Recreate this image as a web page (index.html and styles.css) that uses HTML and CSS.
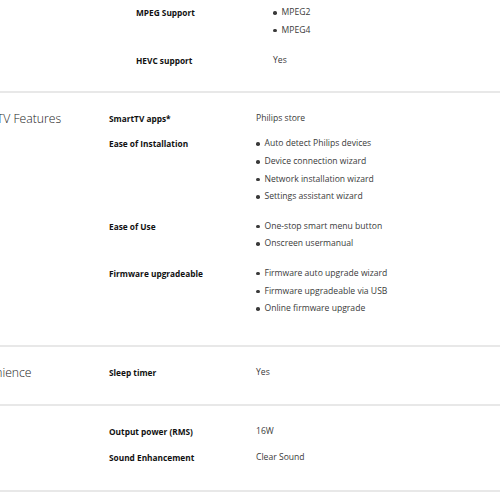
FILE: index.html
```html
<!DOCTYPE html>
<html lang="en">
<head>
  <meta charset="UTF-8" />
  <meta name="viewport" content="width=device-width, initial-scale=1.0" />
  <title>Specifications</title>
  <link rel="stylesheet" href="styles.css">
</head>
<body>

  <div class="specs">

    <!-- Video (tail end) -->
    <section class="spec-group spec-group--first">
      <h3 class="group-title"></h3>
      <dl class="rows rows--inset">
        <div class="row">
          <dt>MPEG Support</dt>
          <dd>
            <ul class="bullets">
              <li>MPEG2</li>
              <li>MPEG4</li>
            </ul>
          </dd>
        </div>
        <div class="row">
          <dt>HEVC support</dt>
          <dd>Yes</dd>
        </div>
      </dl>
    </section>

    <!-- Smart TV -->
    <section class="spec-group">
      <h3 class="group-title">Smart TV Features</h3>
      <dl class="rows">
        <div class="row">
          <dt>SmartTV apps*</dt>
          <dd>Philips store</dd>
        </div>
        <div class="row">
          <dt>Ease of Installation</dt>
          <dd>
            <ul class="bullets">
              <li>Auto detect Philips devices</li>
              <li>Device connection wizard</li>
              <li>Network installation wizard</li>
              <li>Settings assistant wizard</li>
            </ul>
          </dd>
        </div>
        <div class="row">
          <dt>Ease of Use</dt>
          <dd>
            <ul class="bullets">
              <li>One-stop smart menu button</li>
              <li>Onscreen usermanual</li>
            </ul>
          </dd>
        </div>
        <div class="row">
          <dt>Firmware upgradeable</dt>
          <dd>
            <ul class="bullets">
              <li>Firmware auto upgrade wizard</li>
              <li>Firmware upgradeable via USB</li>
              <li>Online firmware upgrade</li>
            </ul>
          </dd>
        </div>
      </dl>
    </section>

    <!-- Convenience -->
    <section class="spec-group">
      <h3 class="group-title">Convenience</h3>
      <dl class="rows">
        <div class="row">
          <dt>Sleep timer</dt>
          <dd>Yes</dd>
        </div>
      </dl>
    </section>

    <!-- Sound -->
    <section class="spec-group">
      <h3 class="group-title">Sound</h3>
      <dl class="rows">
        <div class="row">
          <dt>Output power (RMS)</dt>
          <dd>16W</dd>
        </div>
        <div class="row">
          <dt>Sound Enhancement</dt>
          <dd>Clear Sound</dd>
        </div>
      </dl>
    </section>

  </div>

</body>
</html>
```

FILE: styles.css
```css
:root {
  --text-dark: #111;
  --text-value: #3a3a3a;
  --rule: #e8e8e8;
}

* {
  margin: 0;
  padding: 0;
  box-sizing: border-box;
}

html, body {
  height: 100%;
  background-color: #fff;
  font-family: 'Open Sans', 'Noto Sans', sans-serif;
  overflow: hidden;
}

/* the table is scrolled a little to the left, titles get clipped */
.specs {
  margin-left: -41px;
  width: 600px;
}

.spec-group {
  display: flex;
  padding: 17px 0 23px;
  border-bottom: 2px solid var(--rule);
}

.spec-group--first {
  padding: 4px 0 21px;
}

.group-title {
  width: 150px;
  flex-shrink: 0;
  padding-left: 2px;
  font-size: 12.2px;
  font-weight: 300;
  color: #222;
  line-height: 17px;
  white-space: nowrap;
}

.rows {
  display: flex;
  flex-direction: column;
  gap: 8px;
}

.row {
  display: grid;
  grid-template-columns: 147px 1fr;
  font-size: 8px;
  line-height: 17.6px;
}

.rows--inset {
  gap: 9px;
}

.rows--inset .row {
  grid-template-columns: 137px 1fr;
  padding-left: 27px;
}

.row dt {
  font-weight: 700;
  color: var(--text-dark);
  font-size: 8.3px;
}

.row dd {
  color: var(--text-value);
  font-size: 8.6px;
}

.bullets {
  list-style: none;
  margin-bottom: 4px;
}

.bullets li {
  display: flex;
  align-items: center;
  gap: 5px;
}

.bullets li::before {
  content: "";
  width: 3.5px;
  height: 3.5px;
  border-radius: 50%;
  background: #3a3a3a;
}
```
